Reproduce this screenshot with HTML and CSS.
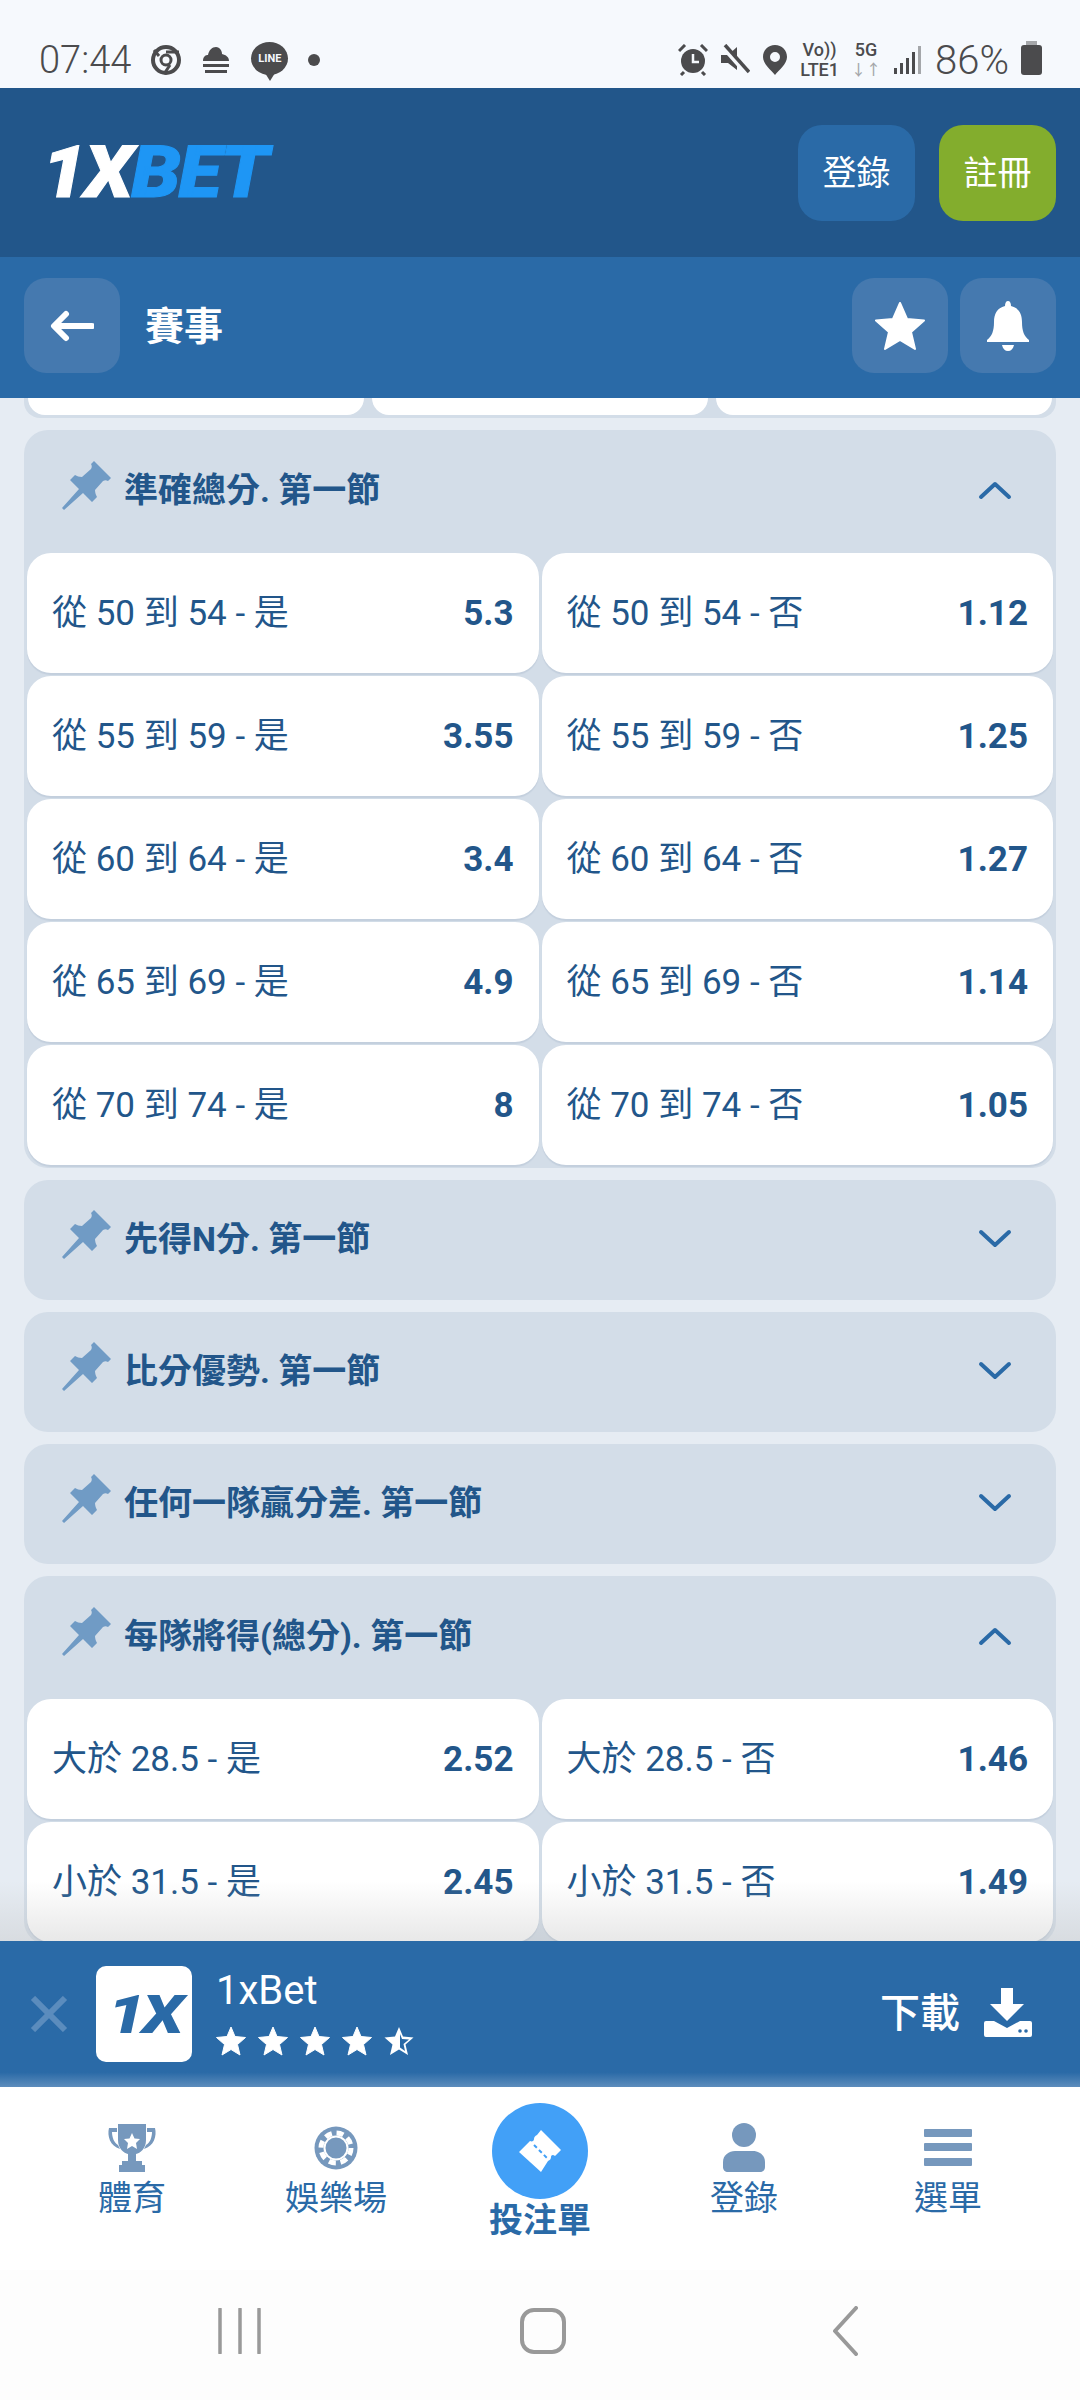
FILE: index.html
```html
<!DOCTYPE html>
<html lang="zh-Hant">
<head>
  <meta charset="UTF-8" />
  <meta name="viewport" content="width=device-width, initial-scale=1.0"/>
  <title>1xBet 賽事</title>
  <link rel="stylesheet" href="styles.css">
</head>
<body>
  <!-- Shared icons -->
  <svg class="defs" aria-hidden="true">
    <symbol id="pin" viewBox="0 0 50 50">
      <path d="M32 1 L49 18 L46 21 C44 20 43 20 41 21 L33 30 C33 33 34 35 35 37 L30 42 L21 33 L2 50 L0 48 L17 29 L8 20 L13 15 C15 16 17 17 20 17 L29 9 C30 7 30 6 29 4 Z"/>
    </symbol>
    <symbol id="up" viewBox="0 0 34 20">
      <path d="M3 17 L17 4 L31 17" fill="none" stroke="#2a6aa7" stroke-width="4" stroke-linecap="round" stroke-linejoin="round"/>
    </symbol>
    <symbol id="down" viewBox="0 0 34 20">
      <path d="M3 3 L17 16 L31 3" fill="none" stroke="#2a6aa7" stroke-width="4" stroke-linecap="round" stroke-linejoin="round"/>
    </symbol>
    <symbol id="star" viewBox="0 0 30 30">
      <path d="M15 1 L19 10.5 L29.500 11.500 L21.500 18.500 L24 29 L15 23.500 L6 29 L8.500 18.500 L0.500 11.500 L11 10.500 Z" stroke="#fff" stroke-width="1" stroke-linejoin="round"/>
    </symbol>
  </svg>

  <div class="page">
    <!-- Status bar -->
    <div class="status">
      <div class="status-left">
        <span class="clock">07:44</span>
        <svg class="st-icon" width="30" height="30" viewBox="0 0 30 30"><circle cx="15" cy="15" r="13" fill="none" stroke="#4b4b4d" stroke-width="4"/><circle cx="15" cy="15" r="5" fill="none" stroke="#4b4b4d" stroke-width="3"/><path d="M15 7 H28 M8 11 L3 5 M19 20 L13 29" stroke="#4b4b4d" stroke-width="3"/></svg>
        <svg class="st-icon" width="30" height="32" viewBox="0 0 30 32" fill="#4b4b4d"><path d="M2 17 C2 12 5 11 7 11 C8 6 11 3 15 3 C19 3 21 7 21 10 C25 11 28 13 28 17 Z"/><rect x="2" y="20" width="26" height="3"/><rect x="4" y="26" width="22" height="3"/></svg>
        <span class="line-badge">LINE</span>
        <span class="st-dot"></span>
      </div>
      <div class="status-right">
        <svg width="30" height="32" viewBox="0 0 30 32"><circle cx="15" cy="17" r="12" fill="#4b4b4d"/><path d="M15 10 V18 H21" fill="none" stroke="#f6f9fd" stroke-width="2.500"/><path d="M1 7 L7 1 M29 7 L23 1 M6 28 L3 31 M24 28 L27 31" stroke="#4b4b4d" stroke-width="3"/></svg>
        <svg width="30" height="32" viewBox="0 0 30 32"><path d="M1 11 H8 L17 3 V26 L8 19 H1 Z" fill="#4b4b4d"/><path d="M3 2 L28 30" stroke="#f6f9fd" stroke-width="6"/><path d="M5 1 L29 28" stroke="#4b4b4d" stroke-width="3.500"/></svg>
        <svg width="26" height="32" viewBox="0 0 26 32"><path d="M13 1 C6 1 1 6 1 13 C1 20 9 26 13 31 C17 26 25 20 25 13 C25 6 20 1 13 1 Z M13 8 A5 5 0 1 1 13 18 A5 5 0 1 1 13 8 Z" fill="#4b4b4d" fill-rule="evenodd"/></svg>
        <span class="net"><span>Vo))</span><span>LTE1</span></span>
        <span class="net net-5g"><span>5G</span><span class="arrows">↓↑</span></span>
        <svg width="28" height="30" viewBox="0 0 28 30" fill="#4b4b4d"><rect x="1" y="23" width="3" height="6"/><rect x="7" y="18" width="3" height="11"/><rect x="13" y="13" width="3" height="16"/><rect x="19" y="7" width="3" height="22"/><rect x="25" y="1" width="3" height="28" fill="#a5a7aa"/></svg>
        <span class="battery-text">86%</span>
        <span class="battery"></span>
      </div>
    </div>

    <!-- Main header -->
    <header class="top">
      <div class="logo"><span class="logo-x">1X</span><span class="logo-bet">BET</span></div>
      <div class="top-buttons">
        <button class="btn btn-login">登錄</button>
        <button class="btn btn-register">註冊</button>
      </div>
    </header>

    <!-- Sub header -->
    <div class="sub">
      <button class="icon-btn">
        <svg width="44" height="32" viewBox="0 0 44 32"><path d="M16 4 L4 16 L16 28 M5 16 H42" fill="none" stroke="#fff" stroke-width="6" stroke-linecap="round" stroke-linejoin="round"/></svg>
      </button>
      <div class="sub-title">賽事</div>
      <button class="icon-btn">
        <svg width="50" height="48" viewBox="0 0 50 48"><path d="M25 1 L32 17 L49 18.500 L36 30 L40 47 L25 38 L10 47 L14 30 L1 18.500 L18 17 Z" fill="#fff" stroke="#fff" stroke-width="2" stroke-linejoin="round"/></svg>
      </button>
      <button class="icon-btn">
        <svg width="44" height="50" viewBox="0 0 44 50" fill="#fff"><path d="M22 0 C24 0 25 2 25 5 C33 7 36 13 36 21 C36 30 38 35 43 39 V41 H1 V39 C6 35 8 30 8 21 C8 13 11 7 19 5 C19 2 20 0 22 0 Z"/><path d="M16 44 H28 C27 48 25 50 22 50 C19 50 17 48 16 44 Z"/></svg>
      </button>
    </div>

    <!-- Markets -->
    <main class="content">
      <div class="stub">
        <div class="stub-card"></div>
        <div class="stub-card"></div>
        <div class="stub-card"></div>
      </div>

      <section class="group">
        <div class="group-head">
          <svg class="pin"><use href="#pin"/></svg>
          <span class="group-title">準確總分. 第一節</span>
          <svg class="chev"><use href="#up"/></svg>
        </div>
        <div class="odds">
          <div class="odd"><span>從 50 到 54 - 是</span><b>5.3</b></div>
          <div class="odd"><span>從 50 到 54 - 否</span><b>1.12</b></div>
          <div class="odd"><span>從 55 到 59 - 是</span><b>3.55</b></div>
          <div class="odd"><span>從 55 到 59 - 否</span><b>1.25</b></div>
          <div class="odd"><span>從 60 到 64 - 是</span><b>3.4</b></div>
          <div class="odd"><span>從 60 到 64 - 否</span><b>1.27</b></div>
          <div class="odd"><span>從 65 到 69 - 是</span><b>4.9</b></div>
          <div class="odd"><span>從 65 到 69 - 否</span><b>1.14</b></div>
          <div class="odd"><span>從 70 到 74 - 是</span><b>8</b></div>
          <div class="odd"><span>從 70 到 74 - 否</span><b>1.05</b></div>
        </div>
      </section>

      <section class="group">
        <div class="group-head closed">
          <svg class="pin"><use href="#pin"/></svg>
          <span class="group-title">先得N分. 第一節</span>
          <svg class="chev"><use href="#down"/></svg>
        </div>
      </section>

      <section class="group">
        <div class="group-head closed">
          <svg class="pin"><use href="#pin"/></svg>
          <span class="group-title">比分優勢. 第一節</span>
          <svg class="chev"><use href="#down"/></svg>
        </div>
      </section>

      <section class="group">
        <div class="group-head closed">
          <svg class="pin"><use href="#pin"/></svg>
          <span class="group-title">任何一隊贏分差. 第一節</span>
          <svg class="chev"><use href="#down"/></svg>
        </div>
      </section>

      <section class="group">
        <div class="group-head">
          <svg class="pin"><use href="#pin"/></svg>
          <span class="group-title">每隊將得(總分). 第一節</span>
          <svg class="chev"><use href="#up"/></svg>
        </div>
        <div class="odds">
          <div class="odd"><span>大於 28.5 - 是</span><b>2.52</b></div>
          <div class="odd"><span>大於 28.5 - 否</span><b>1.46</b></div>
          <div class="odd"><span>小於 31.5 - 是</span><b>2.45</b></div>
          <div class="odd"><span>小於 31.5 - 否</span><b>1.49</b></div>
        </div>
      </section>

      <div class="fade"></div>
    </main>

    <!-- App banner -->
    <div class="banner">
      <svg class="close" width="38" height="36" viewBox="0 0 38 36"><path d="M3 2 L35 34 M35 2 L3 34" stroke="#5b8cbd" stroke-width="6"/></svg>
      <div class="app-icon"><span class="app-mark">1X</span></div>
      <div class="app-info">
        <div class="app-name">1xBet</div>
        <div class="stars">
          <svg class="star"><use href="#star"/></svg>
          <svg class="star"><use href="#star"/></svg>
          <svg class="star"><use href="#star"/></svg>
          <svg class="star"><use href="#star"/></svg>
          <svg class="star" viewBox="0 0 30 30"><path d="M15 1 L19 10.500 L29.500 11.500 L21.500 18.500 L24 29 L15 23.500 L6 29 L8.500 18.500 L0.500 11.500 L11 10.500 Z" fill="#fff"/><path d="M16 8 L18 13 L25 13.500 L19.500 18 L21 25 L16 21.500 Z" fill="#2a6aa7"/></svg>
        </div>
      </div>
      <div class="download">下載</div>
      <svg class="dl-icon" width="50" height="50" viewBox="0 0 50 50" fill="#fff"><path d="M18 1 H30 V17 H41 L24 34 L7 17 H18 Z"/><path d="M1 36 Q1 34 3 34 H11 L24 41 L37 34 H47 Q49 34 49 36 V48 Q49 50 47 50 H3 Q1 50 1 48 Z"/><circle cx="37" cy="44" r="1.800" fill="#2a6aa7"/><circle cx="43" cy="44" r="1.800" fill="#2a6aa7"/></svg>
    </div>

    <!-- Bottom navigation -->
    <nav class="tabs">
      <div class="tab">
        <svg width="50" height="50" viewBox="0 0 50 50" fill="#7698bd"><path d="M11 1 H39 V17 C39 26 33 30 29 31 V38 H35 V42 H38 V49 H12 V42 H15 V38 H21 V31 C17 30 11 26 11 17 Z"/><path d="M10 5 H2 C0 13 3 23 13 26 L11 22 C7 20 5 14 5 9 H10 Z M40 5 H48 C50 13 47 23 37 26 L39 22 C43 20 45 14 45 9 H40 Z"/><path d="M25 10 L27.500 15.500 L33 16 L29 20 L30 26 L25 23 L20 26 L21 20 L17 16 L22.500 15.500 Z" fill="#fff"/></svg>
        <span>體育</span>
      </div>
      <div class="tab">
        <svg width="44" height="50" viewBox="0 0 44 44"><circle cx="22" cy="22" r="21.500" fill="#7698bd"/><circle cx="22" cy="22" r="15" fill="none" stroke="#fff" stroke-width="5" stroke-dasharray="7 4.800"/><circle cx="22" cy="22" r="11" fill="#7698bd"/><circle cx="22" cy="22" r="11.500" fill="none" stroke="#fff" stroke-width="2"/></svg>
        <span>娛樂場</span>
      </div>
      <div class="tab tab-main">
        <div class="tab-circle">
          <svg width="46" height="46" viewBox="0 0 46 46"><path d="M24 2 L44 22 L38 28 C36 26 34 27 34 29 C34 31 33 32 31 33 L24 44 L2 24 L13 13 C15 14 17 13 17 11 C17 9 18 8 20 7 Z" fill="#fff"/><path d="M17 17 L30 30" stroke="#42a0f7" stroke-width="2" stroke-dasharray="4 3"/></svg>
        </div>
        <span>投注單</span>
      </div>
      <div class="tab">
        <svg width="44" height="50" viewBox="0 0 44 50" fill="#7698bd"><circle cx="22" cy="12" r="12"/><path d="M1 44 V39 C1 32 7 28 13 28 H31 C37 28 43 32 43 39 V44 C43 47 41 49 38 49 H6 C3 49 1 47 1 44 Z"/></svg>
        <span>登錄</span>
      </div>
      <div class="tab">
        <svg width="48" height="50" viewBox="0 0 48 50" fill="#7698bd"><rect y="6" width="48" height="8" rx="1"/><rect y="20" width="48" height="8" rx="1"/><rect y="35" width="48" height="8" rx="1"/></svg>
        <span>選單</span>
      </div>
    </nav>

    <!-- System navigation -->
    <div class="sysnav">
      <svg width="44" height="46" viewBox="0 0 44 46"><path d="M2 1 V45 M22 1 V45 M41 1 V45" stroke="#999" stroke-width="3.500" stroke-linecap="round"/></svg>
      <svg class="sys-home" width="46" height="46" viewBox="0 0 46 46"><rect x="2" y="2" width="42" height="42" rx="12" fill="none" stroke="#999" stroke-width="4"/></svg>
      <svg width="26" height="50" viewBox="0 0 26 50"><path d="M24 2 L3 25 L24 48" fill="none" stroke="#999" stroke-width="4" stroke-linecap="round" stroke-linejoin="round"/></svg>
    </div>
  </div>
</body>
</html>
```

FILE: styles.css
```css
* { box-sizing: border-box; margin: 0; padding: 0; font-family: Roboto, 'Noto Sans CJK TC', sans-serif; }

body {
  width: 1080px;
  height: 2400px;
  overflow: hidden;
  background: #fff;
}

.defs { position: absolute; width: 0; height: 0; }

.page {
  display: flex;
  flex-direction: column;
  height: 2400px;
}

/* status bar */
.status {
  display: flex;
  justify-content: space-between;
  align-items: center;
  flex: none;
  height: 88px;
  padding: 32px 38px 0 39px;
  background: #f6f9fd;
  color: #4b4b4d;
}

.status-left, .status-right {
  display: flex;
  align-items: center;
}

.status-left { gap: 20px; }
.status-right { gap: 12px; }

.clock, .battery-text {
  font-size: 38px;
  font-weight: 300;
}

.battery-text {
  margin-left: 2px;
  font-size: 40px;
}

.line-badge {
  position: relative;
  display: flex;
  align-items: center;
  justify-content: center;
  width: 37px;
  height: 33px;
  margin-top: -3px;
  border-radius: 50%;
  background: #4b4b4d;
  color: #f6f9fd;
  font-size: 11px;
  font-weight: 700;
}

.line-badge::after {
  content: '';
  position: absolute;
  bottom: -6px;
  left: 14px;
  border-top: 8px solid #4b4b4d;
  border-left: 5px solid transparent;
  border-right: 5px solid transparent;
}

.st-dot {
  width: 12px;
  height: 12px;
  border-radius: 50%;
  background: #4b4b4d;
}

.net {
  display: flex;
  flex-direction: column;
  align-items: center;
  font-size: 18px;
  font-weight: 500;
  line-height: 20px;
}

.net-5g .arrows { color: #a5a7aa; font-size: 15px; }

.battery {
  position: relative;
  width: 21px;
  height: 30px;
  border-radius: 3px;
  background: #4b4b4d;
}

.battery::before {
  content: '';
  position: absolute;
  top: -4px;
  left: 5px;
  width: 11px;
  height: 4px;
  background: #a5a7aa;
}

/* main header */
.top {
  display: flex;
  justify-content: space-between;
  align-items: center;
  flex: none;
  height: 169px;
  padding: 0 24px 0 42px;
  background: #22568a;
}

.logo {
  font-size: 72px;
  font-weight: 900;
  font-style: italic;
  letter-spacing: -2px;
  line-height: 1;
  -webkit-text-stroke: 1px;
  transform: scaleX(1.1);
  transform-origin: left;
}

.logo-x { color: #fff; }
.logo-bet { color: #1e96f5; }

.top-buttons {
  display: flex;
  gap: 24px;
}

.btn {
  width: 117px;
  height: 96px;
  padding-bottom: 4px;
  border: none;
  border-radius: 24px;
  color: #fff;
  font-size: 34px;
}

.btn-login { background: #2a6aa7; }
.btn-register { background: #83ad2d; }

/* sub header */
.sub {
  display: flex;
  align-items: center;
  flex: none;
  gap: 12px;
  height: 141px;
  padding: 0 24px 4px;
  background: #2a6aa7;
}

.icon-btn {
  display: flex;
  align-items: center;
  justify-content: center;
  width: 96px;
  height: 95px;
  border: none;
  border-radius: 22px;
  background: #4579af;
}

.sub-title {
  flex: 1;
  margin-left: 13px;
  margin-bottom: 6px;
  color: #fff;
  font-size: 39px;
  font-weight: 700;
}

/* markets */
.content {
  position: relative;
  flex: 1;
  min-height: 0;
  overflow: hidden;
  padding: 0 24px;
  background: #e6ecf3;
}

.stub {
  display: grid;
  grid-template-columns: repeat(3, 1fr);
  gap: 8px;
  height: 20px;
  padding: 0 4px;
  background: #d3dde8;
  border-radius: 0 0 16px 16px;
}

.stub-card {
  height: 17px;
  background: #fff;
  border-radius: 0 0 24px 24px;
}

.group {
  margin-top: 12px;
  background: #d3dde8;
  border-radius: 24px;
}

.group-head {
  display: flex;
  align-items: center;
  height: 122px;
  padding: 0 44px 7px 38px;
}

.group-head.closed { height: 120px; }

.pin {
  flex: none;
  width: 50px;
  height: 50px;
  margin-top: -6px;
  fill: #709bc5;
}

.group-title {
  flex: 1;
  margin-left: 12px;
  color: #22568a;
  font-size: 34px;
  font-weight: 700;
}

.chev {
  flex: none;
  width: 34px;
  height: 20px;
  margin-top: 4px;
}

.odds {
  display: grid;
  grid-template-columns: 1fr 1fr;
  gap: 3px;
  padding: 1px 3px 3px;
}

.odd {
  display: flex;
  justify-content: space-between;
  align-items: center;
  height: 120px;
  padding: 0 25px;
  background: #fff;
  border-radius: 24px;
  box-shadow: 0 2px 1px #c3cfdd;
  color: #22568a;
  font-size: 35px;
}

.odd span { margin-bottom: 8px; }

.odd b {
  font-size: 35px;
  font-weight: 700;
}

.fade {
  position: absolute;
  left: 0;
  right: 0;
  bottom: 0;
  height: 60px;
  background: linear-gradient(to bottom, rgba(190, 190, 190, 0), rgba(190, 190, 190, 0.35));
}

/* app banner */
.banner {
  display: flex;
  align-items: center;
  flex: none;
  height: 146px;
  padding: 0 47px 0 30px;
  background: linear-gradient(to bottom, #2a6aa7 90%, #5d8dbc);
}

.close { flex: none; }

.app-icon {
  display: flex;
  align-items: center;
  justify-content: center;
  width: 96px;
  height: 96px;
  margin-left: 28px;
  border-radius: 10px;
  background: #fff;
  color: #2a6aa7;
}

.app-mark {
  font-size: 54px;
  font-weight: 900;
  font-style: italic;
  letter-spacing: -3px;
  transform: scaleX(1.25);
}

.app-info {
  flex: 1;
  margin-left: 24px;
  padding-bottom: 5px;
}

.app-name {
  color: #fff;
  font-size: 40px;
  line-height: 48px;
}

.stars {
  display: flex;
  gap: 12px;
  margin-top: 11px;
}

.star {
  width: 30px;
  height: 30px;
  fill: #fff;
}

.download {
  margin-bottom: 8px;
  color: #fff;
  font-size: 40px;
  font-weight: 500;
}

.dl-icon {
  flex: none;
  margin-left: 23px;
  margin-bottom: 4px;
}

/* bottom navigation */
.tabs {
  display: grid;
  grid-template-columns: repeat(5, 204px);
  flex: none;
  height: 183px;
  padding: 0 30px;
  background: #fff;
}

.tab {
  display: flex;
  flex-direction: column;
  align-items: center;
  padding-top: 36px;
  color: #2a6aa7;
  font-size: 34px;
  line-height: 50px;
}

.tab-main {
  padding-top: 16px;
  font-weight: 700;
  line-height: 42px;
}

.tab-circle {
  display: flex;
  align-items: center;
  justify-content: center;
  width: 96px;
  height: 96px;
  border-radius: 50%;
  background: #42a0f7;
}

/* system navigation */
.sysnav {
  display: flex;
  justify-content: space-between;
  align-items: center;
  flex: none;
  height: 130px;
  padding: 0 222px 8px 218px;
  background: #fdfdfd;
}

.sys-home { margin-right: 8px; }
```
